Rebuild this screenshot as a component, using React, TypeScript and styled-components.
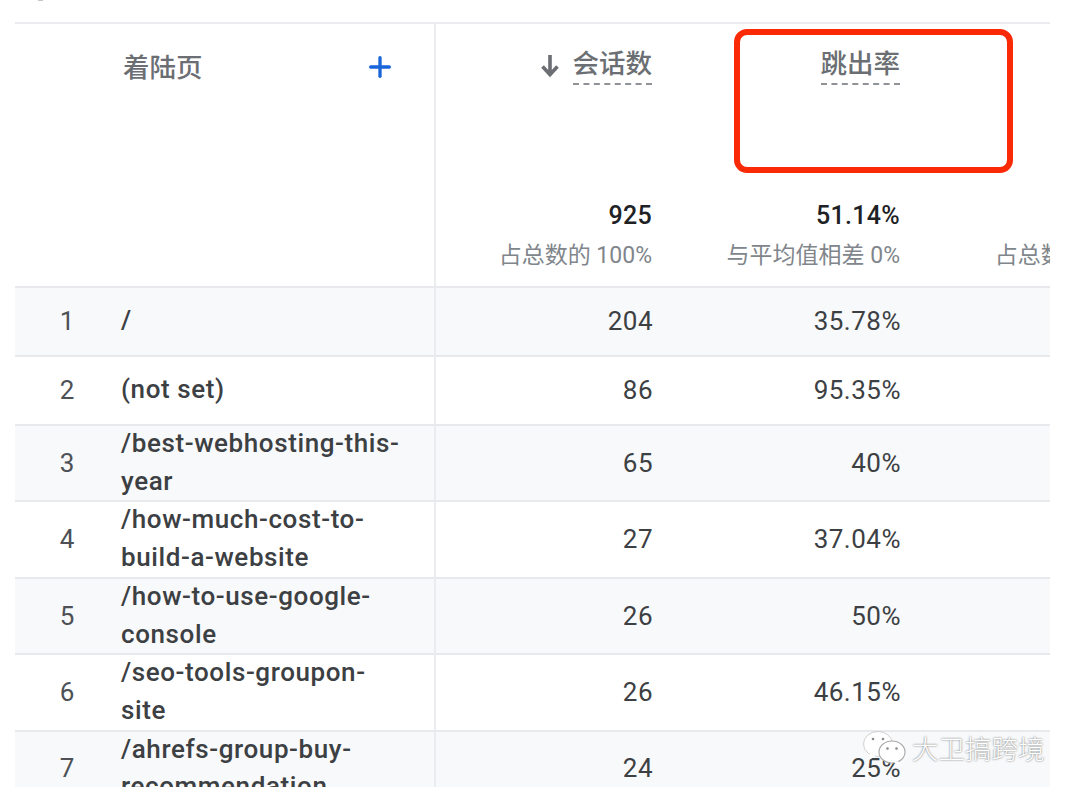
import styled, { createGlobalStyle } from "styled-components";
import { Plus } from "lucide-react";

const GlobalStyle = createGlobalStyle`
    html, body { margin: 0; padding: 0; background: #fff; }
    body { font-family: Roboto, "Noto Sans CJK SC", sans-serif; }
`;

const columns = "419px 218px 248px 248px";

const Page = styled.div`
    position: relative;
    width: 1080px;
    height: 797px;
    overflow: hidden;
    background: #fff;
`;

const TopStrip = styled.div`
    height: 22px;
    padding-left: 38px;
`;

const CutOffMark = styled.div`
    width: 5px;
    height: 1px;
    background: #c4c6c9;
`;

const Table = styled.div`
    margin-left: 15px;
    width: 1035px;
    height: 765px;
    overflow: hidden;
    border-top: 2px solid #ebecf0;
    box-sizing: border-box;
`;

const HeadRow = styled.div`
    display: grid;
    grid-template-columns: ${columns};
    height: 262px;
    box-sizing: border-box;
`;

const DimensionHead = styled.div`
    display: flex;
    justify-content: space-between;
    align-items: flex-start;
    padding: 25px 37px 0 108px;
    font-size: 26.5px;
    font-weight: 500;
    line-height: 38px;
    color: #6b6f73;
`;

const AddButton = styled.span`
    display: flex;
    margin-top: 2px;
    margin-right: 1px;
    color: #1a66d8;
`;

const MetricHead = styled.div<{ $divided?: boolean }>`
    display: flex;
    flex-direction: column;
    align-items: flex-end;
    white-space: nowrap;
    padding-top: 21px;
    border-left: ${(p) => (p.$divided ? "2px solid #ebecef" : "none")};
`;

const MetricTitle = styled.div`
    display: flex;
    align-items: flex-start;
    gap: 13px;
    height: 64px;
    align-self: flex-end;
`;

const TitleText = styled.span`
    font-size: 26.5px;
    font-weight: 500;
    line-height: 38px;
    color: #6b6f73;
    border-bottom: 2px dashed #8f9397;
`;

const SortArrow = styled.svg`
    width: 20px;
    height: 24px;
    margin-top: 9px;
`;

const Total = styled.div`
    margin-top: 88px;
    min-height: 38px;
    font-size: 25px;
    line-height: 38px;
    font-weight: 500;
    letter-spacing: 0.3px;
    color: #202124;
`;

const Share = styled.div`
    font-size: 23px;
    line-height: 30px;
    margin-top: 6px;
    color: #80868b;
`;

const Row = styled.div<{ $odd: boolean }>`
    display: grid;
    grid-template-columns: ${columns};
    min-height: 69px;
    padding-top: 1px;
    box-sizing: border-box;
    box-shadow: inset 0 2px 0 #e8e9ed;
    background: ${(p) => (p.$odd ? "#f8f9fa" : "#fff")};
`;

const NameCell = styled.div`
    display: grid;
    grid-template-columns: 106px 283px;
    align-items: center;
`;

const Rank = styled.div`
    width: 104px;
    text-align: center;
    font-size: 26px;
    color: #4d5156;
`;

const PageName = styled.div`
    font-size: 26px;
    line-height: 37.7px;
    font-weight: 500;
    letter-spacing: 0.6px;
    color: #3c4043;
`;

const ValueCell = styled.div<{ $divided?: boolean }>`
    display: flex;
    align-items: center;
    justify-content: flex-end;
    padding-left: 1px;
    margin-right: -1px;
    font-size: 26px;
    letter-spacing: 0.5px;
    color: #3c4043;
    border-left: ${(p) => (p.$divided ? "2px solid #ebecef" : "none")};
`;

const Highlight = styled.div`
    position: absolute;
    left: 734px;
    top: 29px;
    width: 279px;
    height: 144px;
    box-sizing: border-box;
    border: 6px solid #fb2a06;
    border-radius: 13px;
`;

const Watermark = styled.div`
    position: absolute;
    left: 863px;
    top: 729px;
    display: flex;
    align-items: center;
    gap: 5px;
    font-family: "Noto Sans CJK SC", sans-serif;
    font-size: 26.5px;
    line-height: 38px;
    font-weight: 300;
    color: #fff;
    text-shadow: 0 0 2px rgba(0, 0, 0, 0.65);
`;

const rows = [
    { name: "/", sessions: "204", bounce: "35.78%" },
    { name: "(not set)", sessions: "86", bounce: "95.35%" },
    { name: "/best-webhosting-this-year", sessions: "65", bounce: "40%" },
    { name: "/how-much-cost-to-build-a-website", sessions: "27", bounce: "37.04%" },
    { name: "/how-to-use-google-console", sessions: "26", bounce: "50%" },
    { name: "/seo-tools-groupon-site", sessions: "26", bounce: "46.15%" },
    { name: "/ahrefs-group-buy-recommendation", sessions: "24", bounce: "25%" },
];

function WeChatIcon() {
    return (
        <svg width="44" height="38" viewBox="0 0 44 38">
            <ellipse cx="15" cy="15" rx="14.5" ry="12.5" fill="#fff" stroke="#c4c4c4" strokeWidth="0.8" />
            <path d="M7 24 L6 31 L13 27 Z" fill="#fff" />
            <ellipse cx="29" cy="23" rx="13" ry="11" fill="#fff" stroke="#a8a8a8" strokeWidth="1.1" />
            <path d="M35 32 L38 37 L31 33.5 Z" fill="#fff" />
            <circle cx="10" cy="10" r="1.3" fill="#8a8a8a" />
            <circle cx="20" cy="10" r="1.3" fill="#8a8a8a" />
            <circle cx="24.5" cy="19.5" r="1.3" fill="#8a8a8a" />
            <circle cx="33.5" cy="19.5" r="1.3" fill="#8a8a8a" />
        </svg>
    );
}

export default function App() {
    return (
        <Page>
            <GlobalStyle />
            <TopStrip>
                <CutOffMark />
            </TopStrip>
            <Table>
                <HeadRow>
                    <DimensionHead>
                        着陆页
                        <AddButton>
                            <Plus size={32} strokeWidth={2.5} />
                        </AddButton>
                    </DimensionHead>
                    <MetricHead $divided>
                        <MetricTitle>
                            <SortArrow viewBox="0 0 20 24">
                                <path d="M10 1 V20 M2.5 12.5 L10 20.5 L17.5 12.5" fill="none" stroke="#6b6f73" strokeWidth="3.6" />
                            </SortArrow>
                            <TitleText>会话数</TitleText>
                        </MetricTitle>
                        <Total>925</Total>
                        <Share>占总数的 100%</Share>
                    </MetricHead>
                    <MetricHead>
                        <MetricTitle>
                            <TitleText>跳出率</TitleText>
                        </MetricTitle>
                        <Total>51.14%</Total>
                        <Share>与平均值相差 0%</Share>
                    </MetricHead>
                    <MetricHead>
                        <MetricTitle />
                        <Total />
                        <Share>占总数的 100%</Share>
                    </MetricHead>
                </HeadRow>
                {rows.map((row, i) => (
                    <Row key={row.name} $odd={i % 2 === 0}>
                        <NameCell>
                            <Rank>{i + 1}</Rank>
                            <PageName>{row.name}</PageName>
                        </NameCell>
                        <ValueCell $divided>{row.sessions}</ValueCell>
                        <ValueCell>{row.bounce}</ValueCell>
                        <ValueCell />
                    </Row>
                ))}
            </Table>
            <Highlight />
            <Watermark>
                <WeChatIcon />
                大卫搞跨境
            </Watermark>
        </Page>
    );
}
